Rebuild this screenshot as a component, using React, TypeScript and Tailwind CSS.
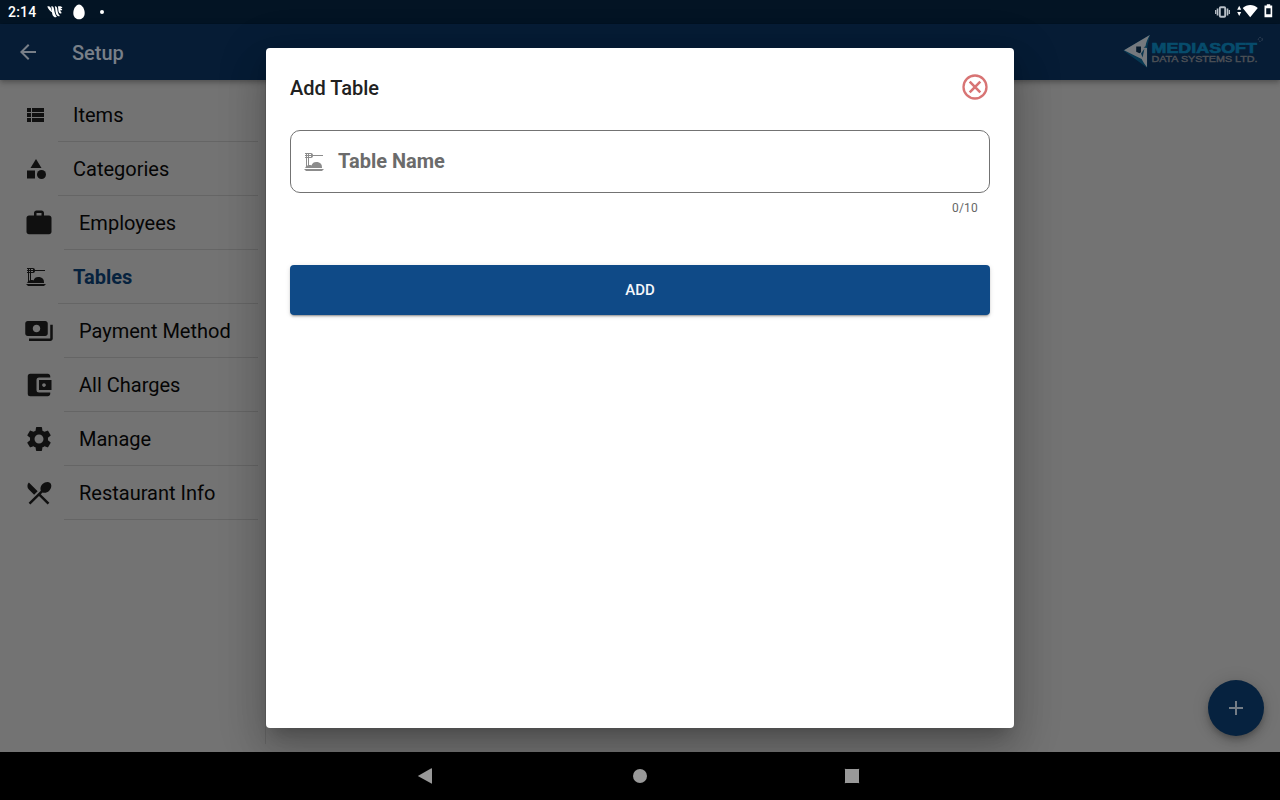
import type { ReactNode } from "react";
import {
  MdArrowBack,
  MdCategory,
  MdWork,
  MdDinnerDining,
  MdPayments,
  MdAccountBalanceWallet,
  MdSettings,
  MdRestaurantMenu,
  MdAdd,
} from "react-icons/md";

type Item = { label: string; icon: ReactNode; large?: boolean; active?: boolean };

const ViewList = () => (
  <svg viewBox="0 0 24 24" className="size-6" fill="currentColor">
    <path d="M3 14h4v-4H3v4zm0 5h4v-4H3v4zM3 9h4V5H3v4zm5 5h12v-4H8v4zm0 5h12v-4H8v4zM8 5v4h12V5H8z" />
  </svg>
);

const items: Item[] = [
  { label: "Items", icon: <ViewList /> },
  { label: "Categories", icon: <MdCategory className="size-6" /> },
  { label: "Employees", icon: <MdWork className="size-[30px]" />, large: true },
  { label: "Tables", icon: <MdDinnerDining className="size-6" />, active: true },
  { label: "Payment Method", icon: <MdPayments className="size-[30px]" />, large: true },
  { label: "All Charges", icon: <MdAccountBalanceWallet className="size-[30px]" />, large: true },
  { label: "Manage", icon: <MdSettings className="size-[30px]" />, large: true },
  { label: "Restaurant Info", icon: <MdRestaurantMenu className="size-[30px]" />, large: true },
];

function StatusBar() {
  return (
    <div className="flex h-6 shrink-0 items-center bg-[#031424] pl-2 text-white">
      <span className="w-[39px] text-[14px] leading-6 font-medium tracking-[0.2px]">2:14</span>
      <svg width="16" height="14" viewBox="0 0 16 14" fill="#fff" className="shrink-0">
        <path d="M.3 1.600C2 .8 3.400 1.600 4 3.500L5.400 7.600C3.200 6.600 1 4 .3 1.600z" />
        <path d="M4.300 1.300c1.800-.4 2.400.8 2.700 2.800.5 3 1.100 5.600 2.900 8-2.200.5-3.800-.5-4.500-2.700C4.700 7 4.900 3.600 4.300 1.300z" />
        <path d="M7.800 1.300c1.600-.2 2.200.8 2.400 2.400.3 2.800.9 5.200 2.700 7.400-1.800.7-3.200-.3-3.900-2.500C8.300 6.400 8.500 3.400 7.800 1.300z" />
        <path d="M10.900 1.500c1.600-.4 3.600-.1 4.600 1-.8.5-1.600.6-2.400.4 1 .2 1.900.9 2.200 2-.8.5-1.500.5-2.100.2.300 1.400.9 2.300 1.700 3-1.400.7-2.600.2-3.200-1.200-.5-1.200-.2-3.400-.8-5.400z" />
      </svg>
      <svg width="12" height="16" viewBox="0 0 12 16" fill="#fff" className="ml-2.5 shrink-0">
        <path d="M6 .5C9 .5 11.700 5 11.700 9c0 4-2.600 6.300-5.700 6.300S.3 13 .3 9C.3 5 3 .5 6 .5z" />
      </svg>
      <span className="ml-[15px] size-1 rounded-full bg-white" />
      <div className="ml-auto flex items-center pr-[7px]">
        <svg width="15" height="12" viewBox="0 0 15 12" fill="none" stroke="#b9c0c8">
          <rect x="4.800" y="1.300" width="5.400" height="9.400" rx="1" strokeWidth="1.900" />
          <path d="M2.500 2.500v7M12.500 2.500v7" strokeWidth="1.600" />
          <path d="M.7 4v4M14.300 4v4" strokeWidth="1.300" />
        </svg>
        <svg width="21" height="14" viewBox="0 0 21 14" fill="#fff" className="-mt-0.5 ml-[7px]">
          <path d="M.2 5.800L2.200 1.700l2 4.100zM.2 8h4l-2 4.100zM5.700 4C10-.1 16.600-.1 20.800 4L13.200 13.300z" />
        </svg>
        <svg width="9" height="14" viewBox="0 0 9 14" className="-mt-0.5 ml-1.5">
          <path d="M2.800.2h3.400v1.300h2V13.200H.5V1.500h2.300zM2.200 4.200v6h4.400v-6z" fill="#fff" fillRule="evenodd" />
        </svg>
      </div>
    </div>
  );
}

function Logo() {
  return (
    <svg width="142" height="36" viewBox="0 0 142 36" className="block">
      <path d="M27 .8L.3 16.400 24.200 33.800l.2-21.800z" fill="#075572" opacity=".5" />
      <path d="M26.800 1C24.600 4.800 23.200 8.200 22.500 12.200L20.500 13.500 24 14 24 33.200C21.600 30.200 20 27.800 18.600 25L1 16.200z" fill="#75797e" />
      <path d="M13.200 12.600h4.800v5.600l-1.500 1.100-3.300-1.500z" fill="#061a2c" />
      <path d="M18 19.500l3.400-4.700-1.800 8.600z" fill="#0a354f" />
      <text x="28.500" y="18.600" textLength="105.500" lengthAdjust="spacingAndGlyphs" fontFamily="Liberation Sans, sans-serif" fontWeight="700" fontSize="14.500" fill="#074c6c" stroke="#074c6c" strokeWidth=".7">MEDIASOFT</text>
      <text x="28.500" y="28" textLength="106" lengthAdjust="spacingAndGlyphs" fontFamily="Liberation Sans, sans-serif" fontSize="8.500" fill="#4c5056" stroke="#4c5056" strokeWidth=".4">DATA SYSTEMS LTD.</text>
      <circle cx="137.300" cy="5.400" r="2" fill="none" stroke="#3d4b5c" strokeWidth=".9" strokeDasharray="1.500 1" />
    </svg>
  );
}

export default function App() {
  return (
    <div className="relative flex h-[800px] w-[1280px] flex-col overflow-hidden bg-[#737373] font-[Roboto,sans-serif]">
      <StatusBar />
      <header className="z-10 flex h-14 shrink-0 items-center bg-[#061c35] pr-[15px] pl-4 text-[#787f88] shadow-[0_2px_4px_-1px_rgba(0,0,0,0.2),0_4px_5px_rgba(0,0,0,0.1),0_1px_8px_rgba(0,0,0,0.08)]">
        <MdArrowBack className="size-6" />
        <h1 className="ml-8 pt-0.5 text-[20px] leading-6 font-medium">Setup</h1>
        <div className="ml-auto">
          <Logo />
        </div>
      </header>

      <main className="flex min-h-0 grow">
        <nav className="mb-2 w-[266px] border-r border-[#676767] pt-2">
          {items.map((item) => (
            <div key={item.label} className="flex h-[54px] pr-[7px] pl-6">
              <div className={item.large ? "flex w-10 items-center text-[#101010]" : "flex w-[34px] items-center text-[#101010]"}>{item.icon}</div>
              <div className="flex grow items-center border-b border-[#656565] pl-[15px]">
                <span className={item.active ? "text-[20px] leading-6 font-bold text-[#06223e]" : "text-[20px] leading-6 text-[#050505]"}>{item.label}</span>
              </div>
            </div>
          ))}
        </nav>
      </main>

      <button className="absolute right-4 bottom-16 flex size-14 items-center justify-center rounded-full bg-[#06223f] text-[#747d86] shadow-[0_3px_5px_-1px_rgba(0,0,0,0.2),0_6px_10px_rgba(0,0,0,0.14),0_1px_18px_rgba(0,0,0,0.12)]">
        <MdAdd className="size-6" />
      </button>

      <section className="absolute top-12 left-[266px] z-20 flex h-[680px] w-[748px] flex-col rounded bg-white px-6 pt-6 shadow-[0_11px_15px_-7px_rgba(0,0,0,0.2),0_24px_38px_3px_rgba(0,0,0,0.14),0_9px_46px_8px_rgba(0,0,0,0.12)]">
        <div className="flex h-8 items-center justify-between">
          <h2 className="text-[20px] leading-8 font-medium text-[#212121]">Add Table</h2>
          <svg width="30" height="30" viewBox="0 0 30 30" fill="none" stroke="#d87474" className="-mt-0.5">
            <circle cx="15" cy="15" r="11.500" strokeWidth="2.300" />
            <path d="M9.700 9.700l10.600 10.600M20.300 9.700L9.700 20.300" strokeWidth="2.600" />
          </svg>
        </div>
        <div className="mt-[26px] flex h-[63px] shrink-0 items-center rounded-[10px] border border-[#737373] pl-[11px] text-[#8c8c8c]">
          <MdDinnerDining className="size-6" />
          <span className="ml-3 pb-0.5 text-[20px] leading-6 font-bold text-[#6b6b6b]">Table Name</span>
        </div>
        <div className="mt-2 pr-3 text-right text-[12px] leading-[14px] tracking-[0.2px] text-[#666666]">0/10</div>
        <button className="mt-[50px] h-[50px] shrink-0 rounded bg-[#0f4a87] text-[15px] font-medium text-[#f4f7fa] shadow-[0_3px_1px_-2px_rgba(0,0,0,0.2),0_2px_2px_rgba(0,0,0,0.14),0_1px_5px_rgba(0,0,0,0.12)]">
          ADD
        </button>
      </section>

      <footer className="z-30 h-12 shrink-0 bg-black">
        <div className="flex h-full items-center pl-[417px]">
          <svg width="16" height="16" viewBox="0 0 16 16" fill="#999">
            <path d="M.8 8L14.400.3Q15 .2 15 .8v14.400q0 .6-.6.4z" />
          </svg>
          <span className="ml-[200px] size-3.5 rounded-full bg-[#999]" />
          <span className="ml-[197px] size-4 rounded-[1.5px] border-[0.5px] border-black bg-[#999]" />
        </div>
      </footer>
    </div>
  );
}
